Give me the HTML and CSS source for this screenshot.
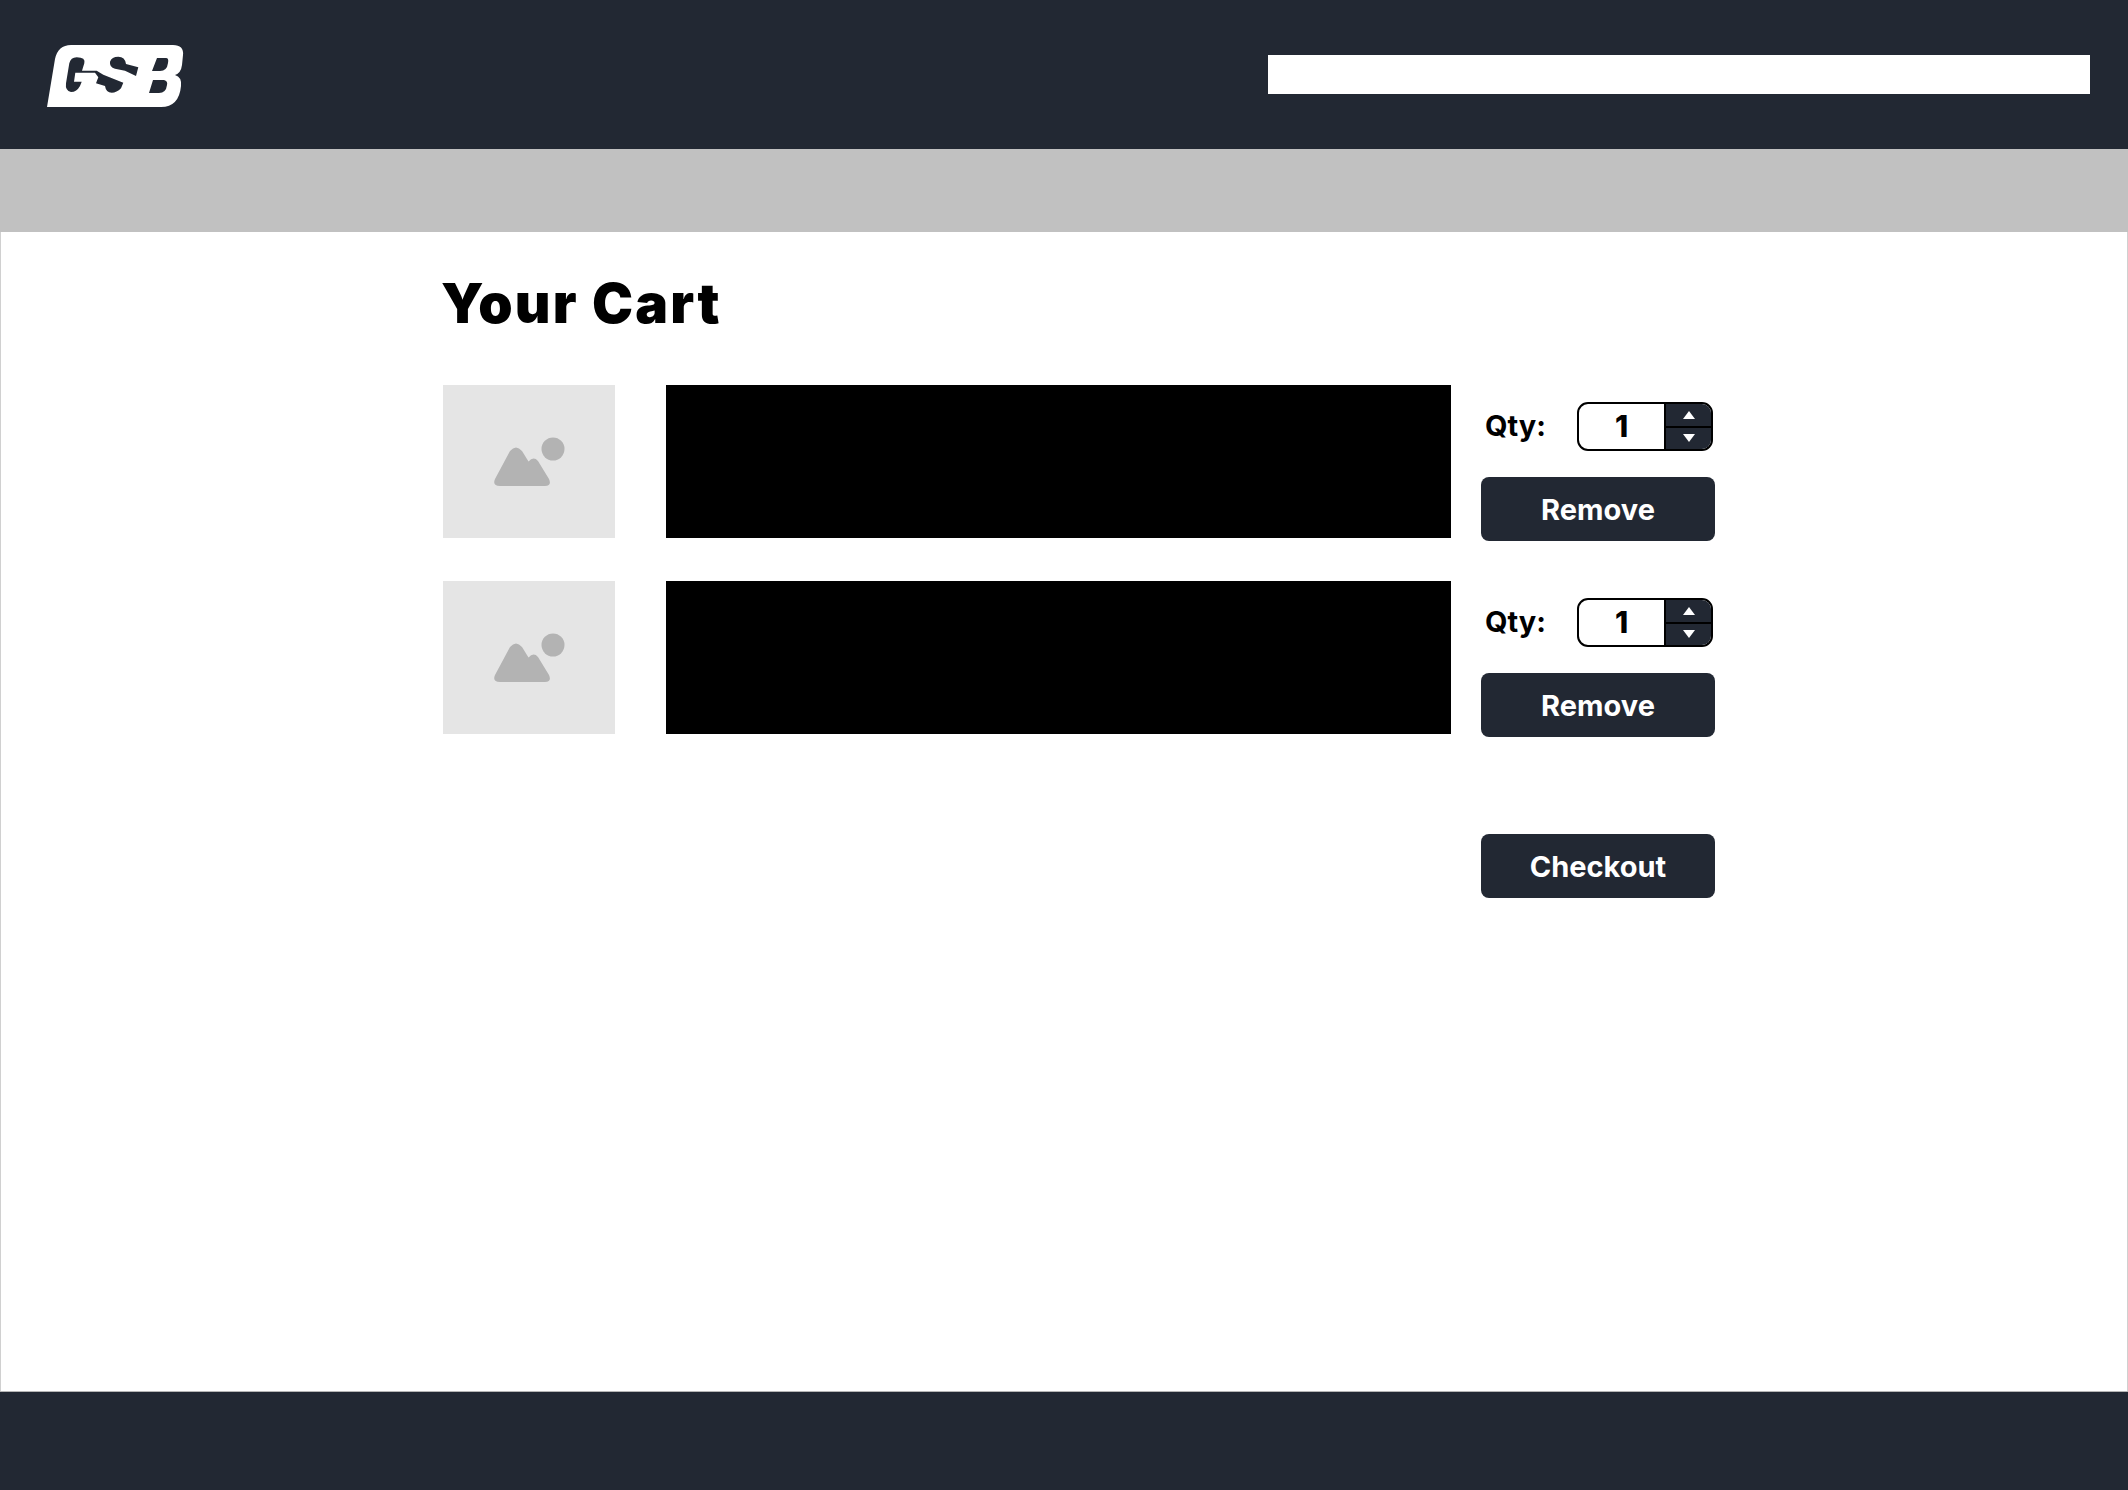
FILE: index.html
```html
<!DOCTYPE html>
<html>
<head>
<meta charset="utf-8">
<title>Your Cart</title>
<link rel="stylesheet" href="styles.css">
</head>
<body>

<header class="site-header">
  <svg class="logo" width="137" height="64" viewBox="0 0 137 64">
    <path fill="#fff" d="M0 63 L8 15 Q11 1 24 1 L126 1 Q137 1 136 11 L135 21 Q134 29 128 31 Q135 33 134 42 Q132 63 114 63 Z"/>
    <path fill="#222833" d="M22.300 19.300 Q23.700 13.300 29.700 13.300 Q39 13.300 37.300 19.300 L35 26.700 L49.700 26.700 L56.300 30.700 L76.300 38.700 L74 44.300 Q69.700 48.700 64.700 48.700 Q59 48.700 58 42 L49 39.300 L51.300 33.300 L48 28.700 L28.300 28.700 L27 37.700 L34.700 37.700 L33 42 Q29.700 48 24 48 Q18 46.700 19 39.300 Z"/>
    <path fill="#222833" d="M63 17.700 Q64.700 12.700 71.300 12.700 Q78 12.700 79 20 L91.300 23.300 L89 32 L78 26.700 L68 24.700 Q62.300 23.300 63 17.700 Z"/>
    <path fill="#222833" d="M110 14 L119 14 Q122 14 121 19 Q120 27 113 27 L105 27 Z"/>
    <path fill="#222833" d="M106 36 L117 36 Q121 37 120 41 Q119 49 112 49 L102 49 Z"/>
  </svg>
  <div class="search-box"></div>
</header>

<nav class="nav-bar"></nav>

<main class="cart">
  <h1>Your Cart</h1>

  <div class="cart-item">
    <div class="thumb">
      <svg width="71" height="49" viewBox="0 0 71 49">
        <circle cx="59" cy="12" r="11.500" fill="#b3b3b3"/>
        <path fill="#b3b3b3" d="M16 14 Q22 7 28 14 L34.500 24.500 Q39.500 19 44 24 L55 42 Q58 49 51 49 L6 49 Q-2 49 1 42 Z"/>
      </svg>
    </div>
    <div class="item-details"></div>
    <div class="item-actions">
      <div class="qty-row">
        <span class="qty-label">Qty:</span>
        <div class="qty-input">
          <span class="qty-value">1</span>
          <div class="spinner">
            <div class="spin-btn"><i class="arrow-up"></i></div>
            <div class="spin-btn"><i class="arrow-down"></i></div>
          </div>
        </div>
      </div>
      <button class="btn">Remove</button>
    </div>
  </div>

  <div class="cart-item">
    <div class="thumb">
      <svg width="71" height="49" viewBox="0 0 71 49">
        <circle cx="59" cy="12" r="11.500" fill="#b3b3b3"/>
        <path fill="#b3b3b3" d="M16 14 Q22 7 28 14 L34.500 24.500 Q39.500 19 44 24 L55 42 Q58 49 51 49 L6 49 Q-2 49 1 42 Z"/>
      </svg>
    </div>
    <div class="item-details"></div>
    <div class="item-actions">
      <div class="qty-row">
        <span class="qty-label">Qty:</span>
        <div class="qty-input">
          <span class="qty-value">1</span>
          <div class="spinner">
            <div class="spin-btn"><i class="arrow-up"></i></div>
            <div class="spin-btn"><i class="arrow-down"></i></div>
          </div>
        </div>
      </div>
      <button class="btn">Remove</button>
    </div>
  </div>

  <div class="checkout-row">
    <button class="btn">Checkout</button>
  </div>
</main>

<footer class="site-footer"></footer>

</body>
</html>
```

FILE: styles.css
```css
html, body {
  margin: 0;
  padding: 0;
}

body {
  display: flex;
  flex-direction: column;
  height: 1490px;
  background-color: white;
  font-family: "Inter", "Liberation Sans", sans-serif;
  color: black;
  overflow: hidden;
}

.site-header {
  flex: none;
  height: 149px;
  box-sizing: border-box;
  padding: 44px 38px 0 47px;
  display: flex;
  justify-content: space-between;
  align-items: flex-start;
  background-color: #222833;
}

.search-box {
  width: 822px;
  height: 39px;
  margin-top: 11px;
  background-color: white;
}

.nav-bar {
  flex: none;
  height: 83px;
  background-color: #c1c1c1;
}

.cart {
  flex: 1;
  box-sizing: border-box;
  padding: 41px 0 0 442px;
  border-left: 1px solid #d0d0d0;
  border-right: 1px solid #d0d0d0;
}

.cart h1 {
  margin: 0 0 51px -2px;
  font-size: 55px;
  line-height: 61px;
  font-weight: 900;
  letter-spacing: 2.200px;
}

.cart-item {
  display: flex;
  height: 153px;
  margin-bottom: 43px;
}

.thumb {
  flex: none;
  width: 172px;
  height: 153px;
  display: flex;
  align-items: center;
  justify-content: center;
  background-color: #e5e5e5;
}

.item-details {
  flex: none;
  width: 785px;
  margin-left: 51px;
  background-color: black;
}

.item-actions {
  flex: none;
  width: 234px;
  margin-left: 30px;
  padding-top: 17px;
}

.qty-row {
  display: flex;
  align-items: center;
  justify-content: space-between;
  height: 49px;
  margin-bottom: 26px;
  padding: 0 2px 0 4px;
}

.qty-label {
  font-size: 29px;
  font-weight: 700;
  margin-top: -2px;
}

.qty-input {
  width: 136px;
  height: 49px;
  box-sizing: border-box;
  display: flex;
  border: 2px solid black;
  border-radius: 11px;
  overflow: hidden;
}

.qty-value {
  flex: 1;
  text-align: center;
  font-size: 30px;
  font-weight: 800;
  line-height: 45px;
}

.spinner {
  flex: none;
  width: 45px;
  display: flex;
  flex-direction: column;
  background-color: #222833;
  border-left: 2px solid black;
}

.spin-btn {
  flex: 1;
  display: flex;
  align-items: center;
  justify-content: center;
}

.spin-btn + .spin-btn {
  border-top: 2px solid black;
}

.arrow-up, .arrow-down {
  width: 0;
  height: 0;
  border-left: 6.500px solid transparent;
  border-right: 6.500px solid transparent;
}

.arrow-up {
  border-bottom: 8px solid white;
}

.arrow-down {
  border-top: 8px solid white;
}

.btn {
  display: block;
  width: 234px;
  height: 64px;
  border: 0;
  border-radius: 8px;
  background-color: #222833;
  color: white;
  font-family: inherit;
  font-size: 29px;
  font-weight: 700;
}

.checkout-row {
  display: flex;
  padding-left: 1038px;
  margin-top: 100px;
}

.site-footer {
  flex: none;
  height: 99px;
  box-sizing: border-box;
  border-top: 1px solid #b5b5b5;
  background-color: #222833;
}
```
